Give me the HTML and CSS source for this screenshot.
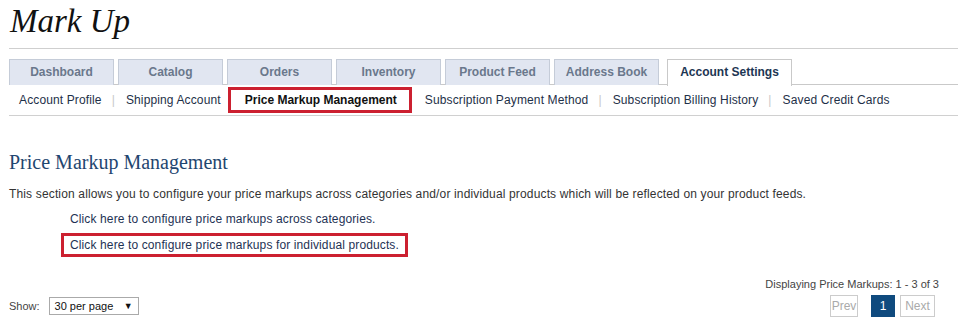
FILE: index.html
```html
<!DOCTYPE html>
<html>
<head>
<meta charset="utf-8">
<link rel="stylesheet" href="styles.css">
</head>
<body>
<div class="page">
  <div class="title">Mark Up</div>
  <div class="tabs">
    <div class="tab">Dashboard</div>
    <div class="tab">Catalog</div>
    <div class="tab">Orders</div>
    <div class="tab">Inventory</div>
    <div class="tab">Product Feed</div>
    <div class="tab">Address Book</div>
    <div class="tab active">Account Settings</div>
  </div>
  <div class="subnav">
    <span class="sub">Account Profile</span><span class="sep">|</span>
    <span class="sub">Shipping Account</span>
    <span class="sub current">Price Markup Management</span>
    <span class="sub">Subscription Payment Method</span><span class="sep">|</span>
    <span class="sub">Subscription Billing History</span><span class="sep">|</span>
    <span class="sub">Saved Credit Cards</span>
  </div>
  <h1 class="heading">Price Markup Management</h1>
  <p class="intro">This section allows you to configure your price markups across categories and/or individual products which will be reflected on your product feeds.</p>
  <div class="links">
    <a class="link">Click here to configure price markups across categories.</a>
    <a class="link boxed">Click here to configure price markups for individual products.</a>
  </div>
  <div class="display">Displaying Price Markups: 1 - 3 of 3</div>
  <div class="bottom">
    <div class="show">
      <span class="show-label">Show:</span>
      <div class="select"><span>30 per page</span><span class="arrow">&#9660;</span></div>
    </div>
    <div class="pager">
      <span class="pg prev">Prev</span>
      <span class="pg on">1</span>
      <span class="pg next">Next</span>
    </div>
  </div>
</div>
</body>
</html>
```
FILE: styles.css
```css
* { box-sizing: border-box; }
html, body { margin: 0; padding: 0; background: #fff; }
body { font-family: "Liberation Sans", Arial, sans-serif; color: #333; }
.page { width: 967px; padding: 1px 9px 0 9px; }
.title {
  font-family: "Liberation Serif", "Times New Roman", serif;
  font-style: italic;
  font-size: 33px;
  line-height: 40px;
  color: #111;
  padding-left: 1px;
  border-bottom: 1px solid #cfcfcf;
  height: 48px;
}
.tabs {
  display: flex;
  margin-top: 10px;
  height: 26px;
  border-bottom: 1px solid #c9c9c9;
  width: 949px;
}
.tab {
  width: 105px;
  height: 26px;
  margin-right: 4px;
  background: #e1e6f1;
  border: 1px solid #c5ccd8;
  border-bottom: none;
  color: #6a788c;
  font-weight: bold;
  font-size: 12px;
  text-align: center;
  line-height: 24px;
}
.tab:nth-child(6) { margin-right: 8px; }
.tab.active {
  width: 125px;
  background: #fff;
  border-color: #c9c9c9;
  color: #1d3653;
  height: 27px;
}
.subnav {
  display: flex;
  align-items: center;
  height: 31px;
  border-bottom: 1px solid #d0d0d0;
  width: 949px;
  font-size: 12px;
  letter-spacing: 0.13px;
  color: #1e3048;
  padding-left: 10px;
}
.sub { line-height: 16px; }
.sep { color: #c8c8c8; margin: 0 11px 0 10px; }
.sub:nth-child(3) { margin-right: 7px; }
.current {
  font-weight: bold;
  letter-spacing: 0;
  color: #111;
  border: 3px solid #cc2030;
  padding: 2px 12px 3px 14px;
  height: 26px;
  display: flex;
  align-items: center;
  margin-right: 13px;
}
.heading {
  font-family: "Liberation Serif", Georgia, serif;
  font-weight: normal;
  font-size: 20px;
  color: #1f4670;
  margin: 34px 0 0 0;
  line-height: 24px;
}
.intro {
  font-size: 12px;
  letter-spacing: 0.15px;
  margin: 12px 0 0 0;
  line-height: 16px;
  color: #333;
}
.links {
  display: flex;
  flex-direction: column;
  align-items: flex-start;
  margin-top: 5px;
  padding-left: 52px;
}
.link {
  font-size: 12px;
  letter-spacing: 0.12px;
  color: #1e3254;
  line-height: 16px;
  padding: 0 6px;
  border: 3px solid transparent;
  height: 24px;
  display: flex;
  align-items: center;
}
.link.boxed { border-color: #cc2030; margin-top: 2px; }
.display {
  text-align: right;
  font-size: 11px;
  color: #444;
  margin-top: 20px;
  padding-right: 19px;
  line-height: 14px;
}
.bottom {
  display: flex;
  justify-content: space-between;
  align-items: center;
  margin-top: 4px;
  padding-right: 23px;
}
.show { display: flex; align-items: center; font-size: 11px; color: #444; }
.show-label { margin-right: 9px; }
.select {
  width: 90px;
  height: 18px;
  border: 1px solid #aaa;
  display: flex;
  justify-content: space-between;
  align-items: center;
  padding: 0 5px 0 5px;
  font-size: 11px;
  color: #111;
}
.arrow { font-size: 9px; }
.pager { display: flex; align-items: center; font-size: 12px; }
.pg {
  height: 22px;
  line-height: 20px;
  border: 1px solid #ccc;
  color: #aaa;
  text-align: center;
}
.prev { width: 28px; margin-right: 13px; }
.on { width: 24px; background: #0f4a7e; border-color: #0f4a7e; color: #fff; margin-right: 5px; }
.next { width: 35px; }
```
